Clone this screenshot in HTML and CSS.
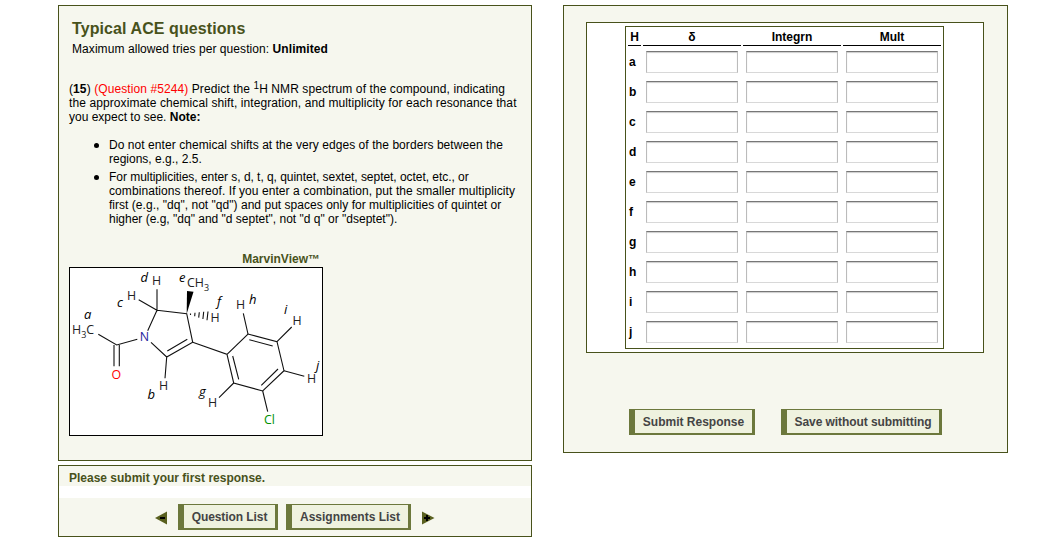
FILE: index.html
```
<!DOCTYPE html>
<html lang="en">
<head>
<meta charset="utf-8">
<title>ACE Questions</title>
<link rel="stylesheet" href="styles.css">
</head>
<body>
<main class="page">
  <div class="left">
    <section class="panel question">
      <h1 class="title">Typical ACE questions</h1>
      <p class="tries">Maximum allowed tries per question: <b>Unlimited</b></p>
      <p class="statement"><span class="l1">(<b>15</b>) <span class="red">(Question #5244)</span> Predict the <sup>1</sup>H NMR spectrum of the compound, indicating</span><br><span class="l2">the approximate chemical shift, integration, and multiplicity for each resonance that</span><br><span class="l3">you expect to see. <b>Note:</b></span></p>
      <ul class="notes">
        <li><span class="n1">Do not enter chemical shifts at the very edges of the borders between the</span><br><span class="n2">regions, e.g., 2.5.</span></li>
        <li><span class="n3">For multiplicities, enter s, d, t, q, quintet, sextet, septet, octet, etc., or</span><br><span class="n4">combinations thereof. If you enter a combination, put the smaller multiplicity</span><br><span class="n5">first (e.g., "dq", not "qd") and put spaces only for multiplicities of quintet or</span><br><span class="n6">higher (e.g, "dq" and "d septet", not "d q" or "dseptet").</span></li>
      </ul>
      <div class="marvin">MarvinView™</div>
      <svg class="molecule" viewBox="70 268 252 167" width="252" height="167">
        <g class="bonds">
          <path d="M157 289.3V310.3L138.7 299.7M157 310.3L147.7 330.7M157 310.3L186.7 313.7L192.7 342.3L166.7 357L151 342.3M167.3 351L187.3 339.3M166.7 357L165 378.3"/>
          <path d="M137.3 339.3L116.7 345L98.3 334.3M114 345V366.3M119.3 345V366.3"/>
          <path d="M192.7 342.3L227 354.3L248 334L277 341.7L284 370.7L262.7 391L233.7 383L227 354.3M249.3 339.7L272.7 346M232.7 356L238.7 379.3M261.3 385.3L278 369"/>
          <path d="M248 334L243.3 313.3M277 341.7L291.7 327M284 370.7L304.3 376.3M262.7 391L267.7 411.7M233.7 383L219 397.7"/>
          <path d="M190.5 313.5V315M195 312.8L194.7 316.2M199.3 312.3L198.7 317.6M203.7 311.8L202.9 319M208 311.5L207 320.3"/>
        </g>
        <path d="M186.7 313.7L187 291L193.5 291.7Z"/>
        <g class="atoms">
          <text x="152" y="285">H</text><text x="127" y="300">H</text>
          <text x="187" y="287">CH<tspan class="sub" dy="4">3</tspan></text>
          <text x="210.5" y="322">H</text><text x="236" y="309">H</text>
          <text x="292.5" y="325">H</text><text x="307" y="383">H</text>
          <text x="208" y="407">H</text><text x="159" y="390">H</text>
          <text x="72" y="334">H<tspan class="sub" dy="4">3</tspan><tspan dy="-4">C</tspan></text>
          <text class="n" x="139.700" y="341">N</text>
          <text class="o" x="111.5" y="379">O</text>
          <text class="cl" x="264" y="424">Cl</text>
        </g>
        <g class="labels">
          <text x="140.500" y="282">d</text><text x="117" y="307">c</text><text x="84" y="319">a</text>
          <text x="179" y="282">e</text><text x="217" y="306">f</text><text x="249" y="304">h</text>
          <text x="284" y="314">i</text><text x="316" y="370">j</text><text x="199" y="396">g</text><text x="147.500" y="399">b</text>
        </g>
      </svg>
    </section>
    <section class="panel status">
      <p class="message">Please submit your first response.</p>
      <nav class="nav">
        <svg class="arrow" width="13" height="14" viewBox="0 0 13 14"><path class="fill" d="M0 7L12 0.500V13.500Z"/><path d="M5 6h5v2H5z"/></svg>
        <button class="btn b1"><span>Question List</span></button>
        <button class="btn b2"><span>Assignments List</span></button>
        <svg class="arrow next" width="13" height="14" viewBox="0 0 13 14"><path class="fill" d="M12.500 7L0 0.500V13.500Z"/><path d="M2 6h6v2H2zM4 4h2v6H4z"/></svg>
      </nav>
    </section>
  </div>
  <section class="panel response">
    <div class="frame">
      <div class="table">
        <div class="row head"><span>H</span><span>δ</span><span>Integrn</span><span>Mult</span></div>
        <div class="row"><b>a</b><input><input><input></div>
        <div class="row"><b>b</b><input><input><input></div>
        <div class="row"><b>c</b><input><input><input></div>
        <div class="row"><b>d</b><input><input><input></div>
        <div class="row"><b>e</b><input><input><input></div>
        <div class="row"><b>f</b><input><input><input></div>
        <div class="row"><b>g</b><input><input><input></div>
        <div class="row"><b>h</b><input><input><input></div>
        <div class="row"><b>i</b><input><input><input></div>
        <div class="row"><b>j</b><input><input><input></div>
      </div>
    </div>
    <div class="actions">
      <button class="btn b3"><span>Submit Response</span></button>
      <button class="btn b4"><span>Save without submitting</span></button>
    </div>
  </section>
</main>
</body>
</html>
```
FILE: styles.css
```
* { box-sizing: border-box; }
body { margin: 0; background: #fff; color: #000; font: 12px/14px "Liberation Sans", Arial, sans-serif; overflow: hidden; }
p, h1, ul { margin: 0; padding: 0; }
.page { display: flex; align-items: flex-start; gap: 31px; padding: 5px 0 0 58px; height: 542px; }
.left { display: flex; flex-direction: column; gap: 4px; width: 474px; }
.panel { border: 1px solid #48521b; background: #f6f7ee; }
.question { height: 456px; padding: 12px 10px 0; white-space: nowrap; }
.title { margin-left: 3px; font-size: 16px; line-height: 22px; color: #48521b; letter-spacing: 0.09px; }
.tries { margin: 2px 0 0 3px; line-height: 14px; letter-spacing: 0.07px; }
.statement { margin-top: 26px; }
.l1 { letter-spacing: 0.09px; }
.l2 { letter-spacing: 0.094px; }
.n1 { letter-spacing: 0.06px; }
.n3 { letter-spacing: -0.04px; }
.n4 { letter-spacing: 0.075px; }
.n5 { letter-spacing: 0.03px; }
.red { color: #f00; }
sup { font-size: 10px; line-height: 0; vertical-align: 4px; }
.notes { list-style: none; margin-top: 14px; padding-left: 40px; }
.notes li { position: relative; margin-bottom: 4px; }
.notes li::before { content: ""; position: absolute; left: -15px; top: 5px; width: 5px; height: 5px; border-radius: 50%; background: #000; }
.marvin { width: 251px; margin-top: 26px; text-align: right; font-weight: bold; color: #48521b; line-height: 15px; }
.molecule { display: block; width: 254px; height: 169px; border: 1px solid #000; background: #fff; }
.bonds { fill: none; stroke: #111; stroke-width: 1.1; }
.atoms, .labels { font: 12.4px "Open Sans", sans-serif; }
.atoms { fill: #222; }
.labels { font-style: italic; font-size: 13px; }
.sub { font-size: 9px; }
.n { fill: #22229c; }
.o { fill: #f00; }
.cl { fill: #009000; }
.status { height: 72px; background: linear-gradient(#f6f7ee 20px, #fff 20px, #fff 32px, #f6f7ee 32px); }
.message { height: 20px; padding: 5px 10px 0; font-weight: bold; color: #48521b; }
.nav { display: flex; align-items: flex-start; margin-top: 12px; padding: 6px 0 0 96px; }
.arrow { margin: 7px 10px 0 0; }
.arrow.next { margin: 7px 0 0 11px; }
.fill { fill: #59601f; }
.btn { height: 26px; padding: 0; border: solid #6c783c; border-width: 1px 3px 2px 6px; border-radius: 0; background: #eff2df; color: #444; font: bold 12px/14px "Liberation Sans", Arial, sans-serif; white-space: nowrap; }
.b1 { width: 100px; margin-right: 8px; letter-spacing: -0.08px; }
.b2 { width: 125px; }
.b3 { width: 126px; }
.b4 { width: 161px; letter-spacing: -0.08px; }
.response { width: 445px; height: 448px; padding: 16px 22px 0; }
.frame { width: 398px; height: 331px; padding: 3px 0 0 38px; border: 1px solid #48521b; background: #fff; }
.table { width: 319px; height: 323px; padding: 2px; border: 1px solid #48521b; }
.row { display: grid; grid-template-columns: 13px 98px 98px 98px; column-gap: 2px; height: 30px; align-items: center; font-weight: bold; }
.row b { padding-left: 1px; }
.head { height: 17px; margin-bottom: 1px; text-align: center; }
.head span { height: 17px; padding-top: 1px; border-bottom: 1px solid #000; }
input { justify-self: center; width: 92px; height: 22px; margin: 0; padding: 0; border: 1px solid; border-color: #777 #bbb #d8d8d8; box-shadow: inset 0 1px 1px #ccc; background: #fff; }
.actions { display: flex; gap: 26px; margin: 56px 0 0 43px; }
```
